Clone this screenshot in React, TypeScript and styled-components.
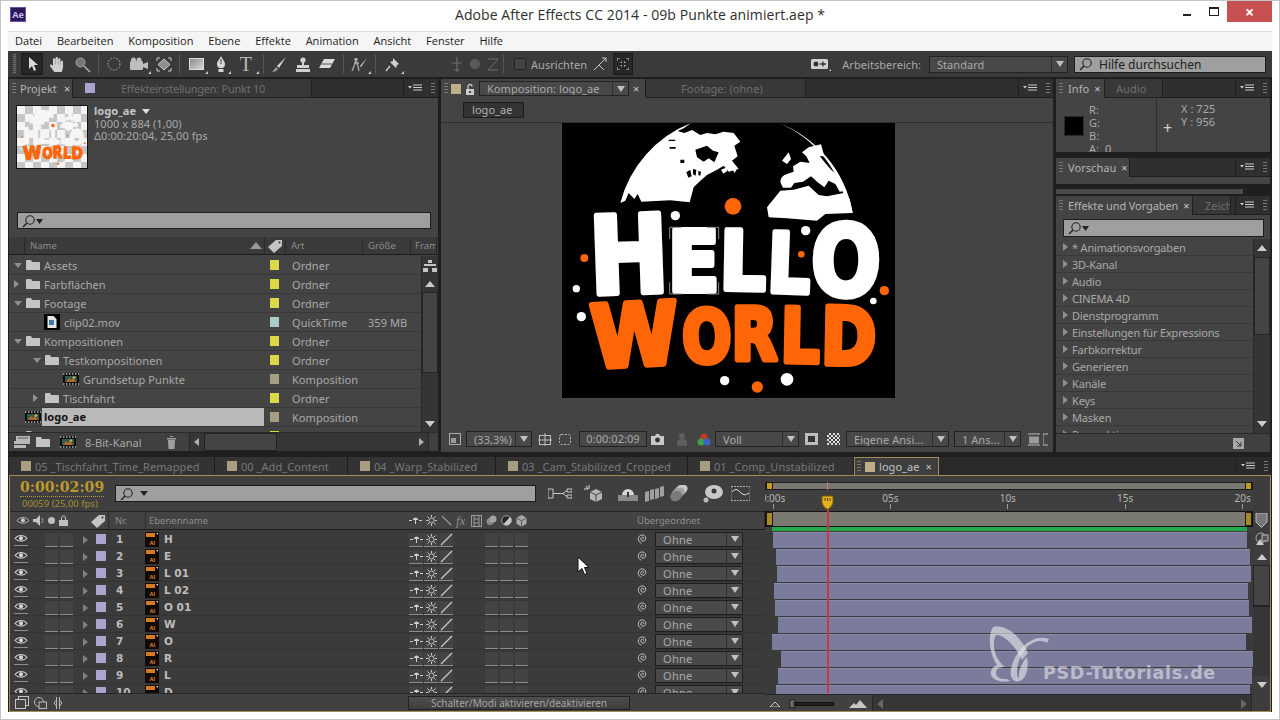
import React from "react";
import styled, { createGlobalStyle } from "styled-components";
import { FaHandPaper } from "react-icons/fa";

const Global = createGlobalStyle`
  html, body { margin: 0; padding: 0; background: #fff; }
  #root { width: 1280px; height: 720px; overflow: hidden; }
  * { box-sizing: border-box; }
`;

const UI = `"Noto Sans", "DejaVu Sans", sans-serif`;
const TEXT = "#a9a9a9";

const Window = styled.div`
  width: 1280px;
  height: 720px;
  background: #fff;
  box-shadow: inset 0 0 0 1px #c4c4c4;
  display: flex;
  flex-direction: column;
  font-family: ${UI};
  font-size: 11px;
  letter-spacing: 0.05px;
  color: ${TEXT};
  overflow: hidden;
`;
const TitleBar = styled.div`
  height: 31px;
  display: grid;
  grid-template-columns: 1fr auto 1fr;
  align-items: start;
  padding-top: 1px;
`;
const AeBadge = styled.div`
  width: 16px;
  height: 15px;
  margin: 6px 0 0 10px;
  background: #2b1a55;
  border: 1px solid #6a4fb0;
  color: #c9b8f2;
  font-size: 9px;
  font-weight: 700;
  line-height: 13px;
  text-align: center;
  letter-spacing: 0;
`;
const TitleText = styled.div`
  font-family: "Open Sans", sans-serif;
  font-size: 14px;
  line-height: 28px;
  letter-spacing: 0.08px;
  color: #2e2e2e;
`;
const WinControls = styled.div`
  display: flex;
  justify-content: flex-end;
  align-items: flex-start;
  padding-right: 8px;
`;
const WinGlyph = styled.div<{ $w: number }>`
  width: ${(p) => p.$w}px;
  height: 21px;
  display: flex;
  align-items: center;
  justify-content: center;
`;
const CloseBtn = styled(WinGlyph)`
  background: #c75050;
  color: #fff;
  font-size: 16px;
  font-weight: 700;
`;
const MenuBar = styled.div`
  height: 20px;
  margin: 0 8px;
  background: #f5f5f5;
  border-top: 1px solid #dcdcdc;
  display: flex;
  align-items: center;
  gap: 14.8px;
  padding-left: 7px;
  padding-bottom: 2px;
  font-family: "Open Sans", sans-serif;
  font-size: 11px;
  letter-spacing: 0.02px;
  color: #222;
`;
const Frame = styled.div`
  width: 1264px;
  margin: 0 8px;
  background: #1f1f1f;
  display: flex;
  flex-direction: column;
`;
const Toolbar = styled.div`
  height: 26px;
  background: #3a3a3a;
  display: flex;
  align-items: center;
  padding-left: 5px;
`;
const Grip = styled.div<{ $m?: string }>`
  width: 4px;
  height: 11px;
  flex-shrink: 0;
  margin: ${(p) => p.$m || "0"};
  background: repeating-linear-gradient(#777 0 1px, transparent 1px 3px);
`;
const ToolGrip = styled(Grip)`
  height: 20px;
  width: 3px;
  background: repeating-linear-gradient(#6a6a6a 0 1px, #4a4a4a 1px 2px);
`;
const ToolSlot = styled.div<{ $w: number; $on?: boolean; $ml?: number; $dim?: boolean }>`
  width: ${(p) => p.$w}px;
  height: 22px;
  flex-shrink: 0;
  margin-left: ${(p) => p.$ml || 0}px;
  display: flex;
  align-items: center;
  justify-content: center;
  position: relative;
  color: #cfcfcf;
  opacity: ${(p) => (p.$dim ? 0.35 : 1)};
  background: ${(p) => (p.$on ? "#262626" : "transparent")};
  border: ${(p) => (p.$on ? "1px solid #1a1a1a" : "0")};
`;
const Corner = styled.span`
  position: absolute;
  right: 1px;
  bottom: 1px;
  width: 0;
  height: 0;
  border-left: 3px solid transparent;
  border-bottom: 3px solid #ccc;
`;
const ToolSep = styled.div<{ $mx?: number }>`
  width: 1px;
  height: 20px;
  flex-shrink: 0;
  margin: 0 ${(p) => (p.$mx === undefined ? 3 : p.$mx)}px;
  background: #555;
`;
const CheckBox = styled.div`
  width: 12px;
  height: 12px;
  margin: 0 5px 0 9px;
  background: #444;
  border: 1px solid #222;
`;
const Spacer = styled.div`
  flex: 1;
`;
const ToolLabel = styled.span<{ $ml?: number; $w?: number }>`
  margin-left: ${(p) => p.$ml || 0}px;
  width: ${(p) => (p.$w ? `${p.$w}px` : "auto")};
  white-space: nowrap;
  color: ${TEXT};
`;
const DropDown = styled.div<{ $w: number; $ml?: number; $mr?: number; $h?: number }>`
  width: ${(p) => p.$w}px;
  height: ${(p) => p.$h || 16}px;
  margin-left: ${(p) => p.$ml || 0}px;
  margin-right: ${(p) => p.$mr || 0}px;
  flex-shrink: 0;
  background: #484848;
  border: 1px solid #222;
  display: flex;
  align-items: center;
  padding: 0 0 0 7px;
  color: ${TEXT};
  white-space: nowrap;
  overflow: hidden;
  & > span:first-child {
    flex: 1;
  }
`;
const DropArrow = styled.div`
  height: 100%;
  width: 16px;
  flex-shrink: 0;
  border-left: 1px solid #2e2e2e;
  margin: 0;
  display: flex;
  align-items: center;
  justify-content: center;
  &::after {
    content: "";
    border-left: 4px solid transparent;
    border-right: 4px solid transparent;
    border-top: 6px solid #c0c0c0;
  }
`;
const SearchBox = styled.div<{ $w?: number; $h?: number; $m?: string }>`
  width: ${(p) => (p.$w ? `${p.$w}px` : "auto")};
  height: ${(p) => p.$h || 16}px;
  margin: ${(p) => p.$m || 0};
  flex-shrink: 0;
  background: #9f9f9f;
  border: 1px solid #1c1c1c;
  display: flex;
  align-items: center;
  padding-left: 4px;
  gap: 6px;
  color: #1d1d1d;
`;
const HelpText = styled.span`
  font-size: 12px;
  letter-spacing: 0;
`;
const Workspace = styled.div`
  height: 380px;
  padding: 2px 1px 0;
  display: flex;
  gap: 3px;
  align-items: flex-start;
`;
const Panel = styled.div<{ $w?: number; $h: number; $mt?: number }>`
  width: ${(p) => (p.$w ? `${p.$w}px` : "100%")};
  height: ${(p) => p.$h}px;
  margin-top: ${(p) => p.$mt || 0}px;
  flex-shrink: 0;
  background: #444;
  display: flex;
  flex-direction: column;
  overflow: hidden;
`;
const TabRow = styled.div`
  height: 19px;
  flex-shrink: 0;
  background: #2f2f2f;
  display: flex;
  align-items: stretch;
  border-bottom: 1px solid #1f1f1f;
`;
const Tab = styled.div<{ $w?: number; $on?: boolean; $pl?: number; $tight?: boolean }>`
  width: ${(p) => (p.$w ? `${p.$w}px` : "auto")};
  display: flex;
  align-items: center;
  flex-shrink: 0;
  padding-left: ${(p) => p.$pl ?? 3}px;
  background: ${(p) => (p.$on ? "#444" : "#383838")};
  margin-bottom: ${(p) => (p.$on ? "-1px" : "0")};
  border-right: 1px solid #1f1f1f;
  color: ${(p) => (p.$on ? "#b4b4b4" : "#6e6e6e")};
  letter-spacing: ${(p) => (p.$tight ? "-0.25px" : "inherit")};
  white-space: nowrap;
  overflow: hidden;
`;
const TabLabel = styled.span`
  letter-spacing: -0.1px;
`;
const CloseX = styled.span<{ $ml: number }>`
  margin-left: ${(p) => p.$ml}px;
  color: #c8c8c8;
  font-size: 11px;
`;
const Swatch = styled.div<{ $c: string; $w?: number; $h?: number; $m?: string }>`
  width: ${(p) => p.$w || 10}px;
  height: ${(p) => p.$h || 10}px;
  margin: ${(p) => p.$m || 0};
  flex-shrink: 0;
  background: ${(p) => p.$c};
`;
const TabEnd = styled.div`
  margin-left: auto;
  display: flex;
  align-items: center;
  border-left: 1px solid #1f1f1f;
  padding-left: 4px;
  gap: 0;
`;
const ThumbRow = styled.div`
  height: 107px;
  flex-shrink: 0;
  display: flex;
  gap: 6px;
  padding: 7px 0 0 7px;
  line-height: 12.5px;
`;
const Thumb = styled.div`
  width: 72px;
  height: 64px;
  border: 1px solid #111;
  flex-shrink: 0;
  background: repeating-conic-gradient(#c6c6c6 0 25%, #f4f4f4 0 50%) 0 0 / 16px 16px;
  overflow: hidden;
`;
const ThumbInfo = styled.div`
  padding-top: 0;
`;
const ThumbTitle = styled.div`
  font-weight: 700;
  color: #c6c6c6;
  display: flex;
  align-items: center;
  gap: 6px;
`;
const TriD = styled.span<{ $s?: number; $c?: string }>`
  display: inline-block;
  flex-shrink: 0;
  border-left: ${(p) => p.$s || 4}px solid transparent;
  border-right: ${(p) => p.$s || 4}px solid transparent;
  border-top: ${(p) => (p.$s || 4) + 1}px solid ${(p) => p.$c || "#ccc"};
`;
const TriU = styled.span<{ $s?: number; $c?: string; $mr?: number }>`
  display: inline-block;
  flex-shrink: 0;
  margin-right: ${(p) => p.$mr || 0}px;
  border-left: ${(p) => p.$s || 5}px solid transparent;
  border-right: ${(p) => p.$s || 5}px solid transparent;
  border-bottom: ${(p) => (p.$s || 5) + 1}px solid ${(p) => p.$c || "#ccc"};
`;
const TriR = styled.span<{ $s?: number; $c?: string; $end?: boolean }>`
  display: inline-block;
  flex-shrink: 0;
  margin: ${(p) => (p.$end ? "0 4px 0 auto" : "0")};
  border-top: ${(p) => p.$s || 4}px solid transparent;
  border-bottom: ${(p) => p.$s || 4}px solid transparent;
  border-left: ${(p) => (p.$s || 4) + 1}px solid ${(p) => p.$c || "#8f8f8f"};
`;
const TriL = styled.span<{ $s?: number; $c?: string }>`
  display: inline-block;
  flex-shrink: 0;
  margin-left: 4px;
  border-top: ${(p) => p.$s || 4}px solid transparent;
  border-bottom: ${(p) => p.$s || 4}px solid transparent;
  border-right: ${(p) => (p.$s || 4) + 1}px solid ${(p) => p.$c || "#8f8f8f"};
`;
const ColHead = styled.div`
  height: 18px;
  margin-top: 8px;
  flex-shrink: 0;
  display: flex;
  align-items: center;
  background: #3a3a3a;
  border-bottom: 1px solid #1c1c1c;
  font-size: 9.5px;
  color: #8c8c8c;
  letter-spacing: 0;
`;
const ColCell = styled.div<{ $w: number; $pl?: number; $between?: boolean }>`
  width: ${(p) => p.$w}px;
  height: 100%;
  flex-shrink: 0;
  padding-left: ${(p) => p.$pl ?? 4}px;
  padding-right: ${(p) => (p.$between ? 2 : 0)}px;
  border-right: 1px solid #2a2a2a;
  display: flex;
  align-items: center;
  justify-content: ${(p) => (p.$between ? "space-between" : "flex-start")};
  overflow: hidden;
  white-space: nowrap;
`;
const ListArea = styled.div`
  flex: 1;
  display: flex;
  min-height: 0;
  margin-top: 1px;
`;
const ListRows = styled.div`
  flex: 1;
  overflow: hidden;
`;
const ProjRow = styled.div`
  height: 19px;
  display: grid;
  grid-template-columns: 255px 28px 76px auto;
  align-items: center;
  border-bottom: 1px solid #383838;
`;
const NameCell = styled.div<{ $pad: number }>`
  display: flex;
  align-items: center;
  height: 100%;
  padding-left: ${(p) => p.$pad}px;
  white-space: nowrap;
  overflow: hidden;
`;
const ArrowSlot = styled.div`
  width: 12px;
  flex-shrink: 0;
  display: flex;
  align-items: center;
`;
const RowName = styled.span<{ $sel?: boolean }>`
  margin-left: 4px;
  ${(p) =>
    p.$sel
      ? `flex: 1; margin-left: 1px; height: 18px; line-height: 18px; padding-left: 2px; background: #b9b9b9; color: #111; font-weight: 700;`
      : ""}
`;
const ScrollV = styled.div<{ $w?: number }>`
  width: ${(p) => p.$w || 17}px;
  flex-shrink: 0;
  display: flex;
  flex-direction: column;
  align-items: center;
  background: #353535;
  border-left: 1px solid #272727;
`;
const ScrollArrow = styled.div<{ $h?: number }>`
  height: ${(p) => p.$h || 17}px;
  width: 100%;
  flex-shrink: 0;
  display: flex;
  align-items: center;
  justify-content: center;
`;
const ScrollThumb = styled.div<{ $h: number }>`
  width: 100%;
  height: ${(p) => p.$h}px;
  flex-shrink: 0;
  background: #444;
  border: 1px solid #252525;
`;
const ScrollGap = styled.div`
  flex: 1;
`;
const ListFooter = styled.div<{ $pl?: number }>`
  height: 19px;
  flex-shrink: 0;
  display: flex;
  align-items: center;
  padding-left: ${(p) => p.$pl || 0}px;
  background: #404040;
  border-top: 1px solid #2a2a2a;
`;
const FootItem = styled.div<{ $ml: number }>`
  margin-left: ${(p) => p.$ml}px;
  flex-shrink: 0;
  display: flex;
  align-items: center;
`;
const ScrollH = styled.div<{ $w: number; $ml?: number }>`
  width: ${(p) => p.$w}px;
  margin-left: ${(p) => p.$ml || 0}px;
  height: 18px;
  flex-shrink: 0;
  display: flex;
  align-items: center;
  background: #363636;
  border-left: 1px solid #272727;
  border-right: 1px solid #272727;
`;
const ScrollHThumb = styled.div<{ $w: number; $ml: number }>`
  width: ${(p) => p.$w}px;
  height: 18px;
  margin-left: ${(p) => p.$ml}px;
  background: #444;
  border: 1px solid #222;
`;
const CrumbRow = styled.div`
  height: 25px;
  flex-shrink: 0;
  display: flex;
  align-items: flex-start;
  padding: 4px 0 0 22px;
  border-bottom: 1px solid #2e2e2e;
`;
const Crumb = styled.div`
  width: 61px;
  height: 16px;
  background: #333;
  border: 1px solid #1c1c1c;
  line-height: 14px;
  padding-left: 8px;
  color: #b2b2b2;
`;
const Canvas = styled.div`
  height: 304px;
  flex-shrink: 0;
  padding-left: 121px;
`;
const Comp = styled.div`
  width: 333px;
  height: 275px;
  background: #000;
`;
const ViewerBar = styled.div`
  height: 24px;
  flex-shrink: 0;
  display: flex;
  align-items: center;
  padding-left: 8px;
`;
const TimeField = styled.div<{ $ml: number }>`
  width: 68px;
  height: 16px;
  margin-left: ${(p) => p.$ml}px;
  flex-shrink: 0;
  border: 1px solid #222;
  background: #484848;
  text-align: center;
  line-height: 14px;
  color: ${TEXT};
`;
const ThinBar = styled.div`
  width: 187px;
  height: 5px;
  flex-shrink: 0;
  background: #4a4a4a;
  margin: 5px 0 2px;
`;
const RightCol = styled.div`
  width: 214px;
  display: flex;
  flex-direction: column;
  flex-shrink: 0;
`;
const InfoBody = styled.div`
  flex: 1;
  display: flex;
  overflow: hidden;
`;
const InfoLeft = styled.div`
  width: 101px;
  display: flex;
  padding: 5px 0 0 8px;
  border-right: 1px solid #2e2e2e;
`;
const InfoBlack = styled.div`
  width: 20px;
  height: 20px;
  margin-top: 13px;
  background: #000;
  border: 1px solid #2a2a2a;
`;
const InfoLines = styled.div`
  margin-left: 5px;
  line-height: 13px;
`;
const InfoRight = styled.div`
  flex: 1;
  padding: 4px 0 0 24px;
  line-height: 13px;
  position: relative;
`;
const Cross = styled.span`
  position: absolute;
  left: 6px;
  top: 22px;
  font-size: 16px;
  line-height: 16px;
  color: #cfcfcf;
`;
const EffectRow = styled.div`
  height: 17px;
  display: flex;
  align-items: center;
  gap: 4px;
  padding-left: 7px;
  border-bottom: 1px solid #383838;
  white-space: nowrap;
  letter-spacing: -0.17px;
`;
const EffectArea = styled.div`
  flex: 1;
  display: flex;
  min-height: 0;
  margin-top: 2px;
`;
const TimelineTabs = styled.div`
  height: 18px;
  margin-left: 1px;
  margin-right: 1px;
  display: flex;
  align-items: stretch;
  background: #2a2a2a;
`;
const TLTab = styled.div<{ $w: number; $on?: boolean }>`
  width: ${(p) => p.$w}px;
  flex-shrink: 0;
  display: flex;
  align-items: center;
  gap: 4px;
  padding-left: ${(p) => (p.$on ? 2 : 12)}px;
  background: ${(p) => (p.$on ? "#3e3e3e" : "#333")};
  color: ${(p) => (p.$on ? "#c2c2c2" : "#787878")};
  border-right: 1px solid #1c1c1c;
  border: ${(p) => (p.$on ? "1px solid #a58c55" : "")};
  border-bottom: 0;
  white-space: nowrap;
  overflow: hidden;
`;
const TimelinePanel = styled.div`
  position: relative;
  height: 237px;
  margin: 0 1px;
  border: 1px solid #a58c55;
  background: #3c3c3c;
  display: flex;
  overflow: hidden;
`;
const LeftPane = styled.div`
  width: 755px;
  flex-shrink: 0;
  display: flex;
  flex-direction: column;
`;
const TopStrip = styled.div`
  height: 36px;
  display: flex;
  align-items: center;
  background: #3f3f3f;
  flex-shrink: 0;
  border-bottom: 1px solid #262626;
`;
const TimeBlock = styled.div`
  width: 105px;
  flex-shrink: 0;
  padding-left: 10px;
  padding-top: 1px;
`;
const TimeCode = styled.div`
  font-family: "DejaVu Serif", serif;
  font-weight: 700;
  font-size: 14px;
  line-height: 17px;
  letter-spacing: 0.05px;
  color: #bd9a2c;
  border-bottom: 1px dotted #b59a3e;
  width: 84px;
`;
const Fps = styled.div`
  font-size: 9.5px;
  line-height: 13px;
  color: #a68c34;
  letter-spacing: 0;
  margin-left: 2px;
`;
const LayerHeader = styled.div`
  height: 18px;
  flex-shrink: 0;
  display: flex;
  align-items: center;
  background: #434343;
  border-bottom: 1px solid #1c1c1c;
  font-size: 9.5px;
  letter-spacing: 0;
  color: #8d8d8d;
`;
const HeadSlot = styled.div<{ $w: number; $pl?: number; $line?: boolean; $gap?: number }>`
  width: ${(p) => p.$w}px;
  flex-shrink: 0;
  height: 100%;
  display: flex;
  align-items: center;
  gap: ${(p) => p.$gap ?? 3}px;
  padding-left: ${(p) => p.$pl || 0}px;
  ${(p) => (p.$line ? "box-shadow: inset -1px 0 0 #2b2b2b;" : "")}
`;
const FxGlyph = styled.span`
  font-family: "Liberation Serif", serif;
  font-style: italic;
  font-size: 13px;
  width: 11px;
`;
const LayerList = styled.div`
  height: 162px;
  flex-shrink: 0;
  overflow: hidden;
  margin-top: 1px;
`;
const LayerRow = styled.div`
  height: 17px;
  display: grid;
  grid-template-columns: 35px 33px 18px 14px 35px 19px 245px 76px 152px 18px 88px;
  align-items: center;
  border-bottom: 1px solid #333;
  background: #3b3b3b;
`;
const EyeCell = styled.div`
  padding-left: 4px;
`;
const ArrowCell = styled.div`
  padding-left: 5px;
`;
const SwitchGroup = styled.div<{ $gap?: number }>`
  display: flex;
  gap: ${(p) => p.$gap ?? 2}px;
  align-items: center;
`;
const SwitchBox = styled.div<{ $w?: number }>`
  width: ${(p) => p.$w || 13}px;
  height: 15px;
  background: #434343;
  border-top: 1px solid #363636;
  border-bottom: 1px solid #8d8d8d;
  display: flex;
  align-items: center;
  justify-content: center;
`;
const LayerNum = styled.div`
  padding-left: 6px;
  font-family: "DejaVu Sans", sans-serif;
  font-weight: 700;
  font-size: 10.5px;
  letter-spacing: 0;
  color: #bdbdbd;
`;
const LayerName = styled.div`
  font-family: "DejaVu Sans", sans-serif;
  font-weight: 700;
  font-size: 10.5px;
  letter-spacing: 0;
  color: #bdbdbd;
`;
const ParentDrop = styled(DropDown)`
  margin: 0;
  height: 15px;
  padding-left: 7px;
  background: #494949;
  border-color: #1e1e1e;
  letter-spacing: 0.3px;
`;
const FootBar = styled.div`
  height: 18px;
  flex-shrink: 0;
  display: flex;
  align-items: center;
  background: #414141;
  border-top: 1px solid #262626;
`;
const ModeButton = styled.div`
  width: 222px;
  height: 14px;
  margin-left: 345px;
  background: linear-gradient(#4e4e4e, #3d3d3d);
  border: 1px solid #222;
  text-align: center;
  line-height: 12px;
  font-size: 10px;
  letter-spacing: 0;
  color: #a4a4a4;
`;
const GraphPane = styled.div`
  position: relative;
  width: 488px;
  flex-shrink: 0;
  display: flex;
  flex-direction: column;
  background: #3f3f3f;
`;
const NavTrack = styled.div`
  height: 8px;
  margin: 6px 0 0;
  flex-shrink: 0;
  background: #7a7a72;
  border: 1px solid #1c1c1c;
  display: flex;
  justify-content: space-between;
`;
const Handle = styled.div<{ $h: number }>`
  width: 7px;
  height: ${(p) => p.$h}px;
  margin-top: -1px;
  background: #c59b1f;
  border: 1px solid #1a1a1a;
  flex-shrink: 0;
`;
const Ruler = styled.div`
  height: 21px;
  flex-shrink: 0;
  display: flex;
  gap: 97.4px;
  overflow: hidden;
`;
const RulerMark = styled.div<{ $first?: boolean }>`
  width: 20px;
  margin-left: ${(p) => (p.$first ? -2 : 0)}px;
  flex-shrink: 0;
  display: flex;
  flex-direction: column;
  align-items: center;
  font-size: 10px;
  letter-spacing: 0;
  color: #b4b4b4;
  line-height: 12px;
  padding-top: 2px;
  white-space: nowrap;
  &::after {
    content: "";
    width: 1px;
    height: 5px;
    background: #9d9d9d;
  }
`;
const WorkArea = styled.div`
  height: 16px;
  flex-shrink: 0;
  background: #7a7a72;
  border: 1px solid #141414;
  display: flex;
  justify-content: space-between;
`;
const WorkHandle = styled(Handle)`
  margin-top: 0;
  background: #a98a22;
`;
const Green = styled.div`
  height: 4px;
  margin-left: 7px;
  margin-right: 6px;
  flex-shrink: 0;
  background: #25a84c;
`;
const BarList = styled.div`
  height: 162px;
  flex-shrink: 0;
  margin-top: 1px;
  overflow: hidden;
`;
const BarRow = styled.div`
  height: 17px;
  background: #3b3b3b;
`;
const Bar = styled.div<{ $l: number; $w: number }>`
  margin-left: ${(p) => p.$l}px;
  width: ${(p) => p.$w}px;
  height: 16px;
  background: #7b7b9c;
  border-top: 1px solid #8a8aa9;
`;
const Playhead = styled.div`
  position: absolute;
  left: 56px;
  top: 19px;
  width: 13px;
  height: 198px;
  display: flex;
  flex-direction: column;
  align-items: center;
`;
const PlayLine = styled.div`
  width: 2px;
  flex: 1;
  background: #c9364c;
`;
const NavMark = styled.div`
  position: absolute;
  left: 62px;
  top: 6px;
  width: 1px;
  height: 8px;
  background: #d9707f;
`;
const Watermark = styled.div`
  position: absolute;
  left: 222px;
  top: 149px;
  display: flex;
  align-items: flex-end;
  color: rgba(230, 230, 235, 0.62);
`;
const WaterText = styled.div`
  font-family: "DejaVu Sans", sans-serif;
  font-weight: 700;
  font-size: 17.5px;
  letter-spacing: 0.7px;
  margin-left: -10px;
  line-height: 22px;
  margin-bottom: -1px;
`;
const Rail = styled.div`
  width: 17px;
  flex-shrink: 0;
  display: flex;
  flex-direction: column;
  align-items: center;
  background: #3d3d3d;
`;
const RailSlot = styled.div<{ $h: number }>`
  height: ${(p) => p.$h}px;
  flex-shrink: 0;
  display: flex;
  align-items: center;
  justify-content: center;
  width: 100%;
`;
const RailTrack = styled.div`
  flex: 1;
  width: 100%;
  background: #363636;
  border-top: 1px solid #262626;
`;
const SliderTrack = styled.div`
  width: 40px;
  height: 4px;
  background: #222;
  border: 1px solid #111;
`;
const SliderKnob = styled.div`
  width: 7px;
  height: 9px;
  margin-right: -2px;
  background: #666;
  border: 1px solid #222;
  border-radius: 3px 3px 0 0;
`;
const CursorWrap = styled.div`
  position: absolute;
  left: 567px;
  top: 80px;
`;
const LetterT = styled.span`
  font-family: "Liberation Serif", serif;
  font-size: 20px;
  color: #b8b8b8;
`;

const Ic: React.FC<{ w: number; h?: number; children: React.ReactNode }> = ({ w, h, children }) => (
  <svg width={w} height={h ?? w} viewBox={`0 0 ${w} ${h ?? w}`} style={{ display: "block", flexShrink: 0 }}>
    {children}
  </svg>
);

const MenuGlyph = () => (
  <Ic w={14} h={8}>
    <path d="M0 2h4L2 4.500z" fill="#ccc" />
    <path d="M5 1h9M5 3.500h9M5 6h9" stroke="#ccc" strokeWidth="1.200" />
  </Ic>
);
const TabMenu = () => (
  <TabEnd>
    <MenuGlyph />
    <Grip $m="0 3px 0 9px" />
  </TabEnd>
);
const Loupe = () => (
  <Ic w={22} h={14}>
    <circle cx="8" cy="6" r="4.200" fill="none" stroke="#222" strokeWidth="1.100" />
    <path d="M5 9L1 13" stroke="#222" strokeWidth="1.400" />
    <path d="M14 5h7l-3.500 5z" fill="#222" />
  </Ic>
);
const LoupeOnly = () => (
  <Ic w={14} h={14}>
    <circle cx="8" cy="6" r="4.200" fill="none" stroke="#222" strokeWidth="1.100" />
    <path d="M5 9L1 13" stroke="#222" strokeWidth="1.400" />
  </Ic>
);
const Folder = () => (
  <Ic w={14} h={10}>
    <path d="M0 2V1q0-1 1-1h4l1 2h7q1 0 1 1v7H0z" fill="#c4c4c4" />
  </Ic>
);
const CompIcon = () => (
  <Ic w={16} h={12}>
    <rect width="16" height="12" fill="#0c0c0c" />
    <path d="M0 1h16M0 11h16" stroke="#bbb" strokeWidth="1.400" strokeDasharray="1.500 1.500" />
    <rect x="2" y="3" width="12" height="6" fill="#2d5d4e" />
    <path d="M3 9l3-4 2 2 2-3 3 5z" fill="#b16a2b" />
    <circle cx="11" cy="4.500" r="1.200" fill="#d8b04a" />
  </Ic>
);
const MovIcon = () => (
  <Ic w={16} h={16}>
    <rect width="16" height="16" fill="#000" />
    <path d="M3.500 2h6l3 3v9h-9z" fill="#e6e6e6" />
    <rect x="5" y="6" width="5" height="5" fill="#3f78a8" />
  </Ic>
);
const Eye = () => (
  <Ic w={14} h={13}>
    <path d="M1 5.500C4 1.500 10 1.500 13 5.500 10 9 4 9 1 5.500z" fill="none" stroke="#c8c8c8" strokeWidth="1.100" />
    <circle cx="7" cy="5.300" r="2" fill="#d8d8d8" />
    <path d="M0 12.500h14" stroke="#8d8d8d" />
  </Ic>
);
const AiIcon = () => (
  <Ic w={14} h={15}>
    <rect width="14" height="15" fill="#120a04" />
    <rect x="1" y="1" width="9" height="4" fill="#d77a24" />
    <path d="M11 1h2v2z" fill="#e8e8e8" />
    <text x="4.500" y="12.500" fontSize="5.500" fontWeight="700" fill="#e08a32" fontFamily="Liberation Sans, sans-serif">
      AI
    </text>
  </Ic>
);
const Spiral = () => (
  <Ic w={12} h={12}>
    <path
      d="M6 6.200c1-.6.8-1.900-.4-2-1.500-.1-2.300 1.500-1.500 2.900 1 1.600 3.600 1.400 4.400-.4C9.400 4.600 8 2 5.500 1.900 3 1.800 1 3.800 1.300 6.500c.2 1.800 1.400 3.200 3.200 3.600"
      fill="none"
      stroke="#c4c4c4"
      strokeWidth="1"
    />
  </Ic>
);
const Shy = () => (
  <Ic w={13} h={9}>
    <path d="M0 4.500h3M10 4.500h3" stroke="#d0d0d0" strokeWidth="1.100" />
    <path d="M4 3q2.500-3 5 0v1H4zM6 4h1v4H6z" fill="#d0d0d0" />
  </Ic>
);
const Sun = () => (
  <Ic w={11} h={11}>
    <circle cx="5.500" cy="5.500" r="2.600" fill="none" stroke="#c8c8c8" />
    <path d="M5.500 0v2M5.500 9v2M0 5.500h2M9 5.500h2M1.500 1.500l1.500 1.500M8 8l1.500 1.500M1.500 9.500L3 8M8 3l1.500-1.500" stroke="#c8c8c8" />
  </Ic>
);
const Slash = () => (
  <Ic w={13} h={13}>
    <path d="M1 12L12 1" stroke="#c9c9c9" strokeWidth="1.300" />
  </Ic>
);
const BackSlash = () => (
  <Ic w={11} h={11}>
    <path d="M1 1l9 9" stroke="#9a9a9a" strokeWidth="1.200" />
  </Ic>
);
const Swirl = () => (
  <Ic w={11} h={11}>
    <circle cx="4" cy="6.500" r="3.500" fill="#8b8b8b" />
    <circle cx="7" cy="4" r="3.500" fill="#a2a2a2" />
  </Ic>
);
const Half = () => (
  <Ic w={11} h={11}>
    <circle cx="5.500" cy="5.500" r="4.800" fill="#222" stroke="#aaa" />
    <path d="M9 2a4.800 4.800 0 0 1-6.500 7z" fill="#c8c8c8" />
  </Ic>
);
const Cube = () => (
  <Ic w={11} h={12}>
    <path d="M5.500 0l5 2.800v6l-5 3-5-3v-6z" fill="#a8a8a8" />
    <path d="M.5 2.800l5 3 5-3M5.500 5.800v6" stroke="#444" fill="none" strokeWidth=".8" />
  </Ic>
);
const Film = () => (
  <Ic w={11} h={12}>
    <rect x=".5" y=".5" width="10" height="11" fill="none" stroke="#9a9a9a" />
    <path d="M3 .5v11M8 .5v11M3 4h5M3 8h5" stroke="#9a9a9a" />
  </Ic>
);
const Tag = () => (
  <Ic w={16} h={14}>
    <path d="M1 8L9 1h6v6l-8 7z" fill="#c4c4c4" />
    <circle cx="12.500" cy="3.500" r="1" fill="#333" />
  </Ic>
);

const LAYERS = ["H", "E", "L 01", "L 02", "O 01", "W", "O", "R", "L", "D"];
const BARS: [number, number][] = [
  [773, 1247], [776, 1250], [777, 1251], [774, 1248], [775, 1249],
  [778, 1252], [772, 1246], [781, 1253], [778, 1252], [776, 1250],
];
const EFFECTS = [
  "* Animationsvorgaben", "3D-Kanal", "Audio", "CINEMA 4D", "Dienstprogramm",
  "Einstellungen für Expressions", "Farbkorrektur", "Generieren", "Kanäle", "Keys", "Masken", "Perspektive",
];
type Item = { name: string; pad: number; arrow?: "r" | "d"; icon: "f" | "m" | "c"; color: string; art: string; size?: string; sel?: boolean };
const YEL = "#dcd84a";
const ITEMS: Item[] = [
  { name: "Assets", pad: 5, arrow: "d", icon: "f", color: YEL, art: "Ordner" },
  { name: "Farbflächen", pad: 5, arrow: "r", icon: "f", color: YEL, art: "Ordner" },
  { name: "Footage", pad: 5, arrow: "d", icon: "f", color: YEL, art: "Ordner" },
  { name: "clip02.mov", pad: 35, icon: "m", color: "#a8cdc8", art: "QuickTime", size: "359 MB" },
  { name: "Kompositionen", pad: 5, arrow: "d", icon: "f", color: YEL, art: "Ordner" },
  { name: "Testkompositionen", pad: 24, arrow: "d", icon: "f", color: YEL, art: "Ordner" },
  { name: "Grundsetup Punkte", pad: 54, icon: "c", color: "#a59e82", art: "Komposition" },
  { name: "Tischfahrt", pad: 24, arrow: "r", icon: "f", color: YEL, art: "Ordner" },
  { name: "logo_ae", pad: 16, icon: "c", color: "#a59e82", art: "Komposition", sel: true },
  { name: "Lampen", pad: 5, arrow: "r", icon: "f", color: YEL, art: "Ordner" },
];

// ink share of the advance and left bearing for DejaVu Sans Bold, so textLength can size the letter itself
const GLYPH: Record<string, [number, number]> = {
  H: [0.78, 0.11],
  E: [0.79, 0.134],
  L: [0.83, 0.144],
  O: [0.87, 0.065],
  W: [0.946, 0.027],
  R: [0.88, 0.12],
  D: [0.836, 0.11],
};
const STROKE = 18;

const HelloWorld: React.FC<{ small?: boolean }> = ({ small }) => {
  const hi = small ? "#f6f6f6" : "#fff";
  const or = "#ff6608";
  const L = (c: string, ch: string, x: number, bottom: number, h: number, w: number, rot: number) => {
    const [ink, lsb] = GLYPH[ch];
    const len = (w - STROKE) / ink;
    const fs = (h - STROKE) / 0.729;
    return (
      <text
        key={ch + x}
        x={x + STROKE / 2 - lsb * len}
        y={bottom - STROKE / 2}
        fontSize={fs}
        textLength={len}
        lengthAdjust="spacingAndGlyphs"
        fontFamily="DejaVu Sans, sans-serif"
        fontWeight={700}
        fill={c}
        stroke={c}
        strokeWidth={STROKE}
        strokeLinejoin="round"
        transform={`rotate(${rot} ${x + w / 2} ${bottom})`}
      >
        {ch}
      </text>
    );
  };
  return (
    <svg width="100%" height="100%" viewBox="5 12 999 825" style={{ display: "block" }}>
      <g fill={hi}>
        <path d="M180 252A352 352 0 0 1 392 12L370 28 352 36 372 42 395 33 420 48 440 42 465 46 490 38 520 42 540 68 522 80 532 112 515 125 535 150 505 158 490 140 470 152 440 168 420 185 400 205 388 250 330 244 243 248 232 225 222 240 205 222 195 245Z" />
        <path d="M655 12A352 352 0 0 1 877 282L862 282A338 338 0 0 0 655 12Z" />
        <path d="M620 265L640 240 660 215 700 212 745 200 775 228 800 232 850 222 868 240 877 282 795 285 770 305 680 298 625 295Z" />
        <path d="M660 190Q660 170 680 165L700 158 698 142 720 128 748 132 738 112 725 100 745 85 782 76 792 112 778 112 810 150 835 172 858 215 838 218 825 195 805 185 792 205 772 190 752 172 728 188 702 192 692 206 668 206Z" />
        <path d="M665 125L685 100 692 120 680 135Z" />
        <path d="M482 152l15-6 4 10-12 8zM516 148l12 6-6 8z" />
      </g>
      {!small && (
        <g fill="#000">
          <path d="M405 92L440 80 458 95 475 100 462 130 445 118 430 128 410 115Z" />
          <path d="M325 62h20v4h-20zM328 84h18v5h-18zM360 122h12v10h-12z" />
          <path d="M378 160l12-8 4 20-10 4zM398 150l10 2-2 18-8-4zM414 156l8 2-2 12-6-2z" />
        </g>
      )}
      {L(hi, "H", 108, 530, 252, 204, -2)}
      {L(hi, "E", 335, 525, 200, 140, 0)}
      {L(hi, "L", 488, 520, 195, 132, 1)}
      {L(hi, "L", 628, 528, 196, 124, 2)}
      {L(hi, "O", 755, 538, 232, 200, 1)}
      {L(or, "W", 95, 748, 205, 266, -3)}
      {L(or, "O", 368, 738, 176, 146, -1)}
      {L(or, "R", 522, 733, 175, 138, 0)}
      {L(or, "L", 668, 738, 180, 114, 1)}
      {L(or, "D", 790, 745, 190, 156, 1)}
      <g fill={hi}>
        <circle cx="345" cy="290" r="14" />
        <circle cx="48" cy="509" r="11" />
        <circle cx="63" cy="593" r="14" />
        <circle cx="736" cy="335" r="14" />
        <circle cx="939" cy="546" r="10" />
        <circle cx="493" cy="785" r="14" />
        <circle cx="680" cy="781" r="19" />
      </g>
      <g fill={or}>
        <circle cx="518" cy="262" r="25" />
        <circle cx="72" cy="417" r="12" />
        <circle cx="723" cy="406" r="10" />
        <circle cx="972" cy="515" r="14" />
        <circle cx="591" cy="804" r="17" />
      </g>
      {!small && (
        <path d="M328 360v-35h35M440 325h35v35M475 490v35h-35M363 525h-35v-35" fill="none" stroke="#8a8a8a" strokeWidth="3" />
      )}
    </svg>
  );
};

const ProjectPanel = () => (
  <Panel $w={429} $h={372}>
    <TabRow>
      <Tab $w={64} $on>
        <Grip $m="0 4px 0 0" />
        Projekt
        <CloseX $ml={7}>×</CloseX>
      </Tab>
      <Tab $w={239} $pl={12} $tight>
        <Swatch $c="#a9a4cc" $m="0 26px 0 0" />
        Effekteinstellungen: Punkt 10
      </Tab>
      <TabMenu />
    </TabRow>
    <ThumbRow>
      <Thumb>
        <HelloWorld small />
      </Thumb>
      <ThumbInfo>
        <ThumbTitle>
          logo_ae <TriD $c="#ddd" />
        </ThumbTitle>
        <div>1000 x 884 (1,00)</div>
        <div>Δ0:00:20:04, 25,00 fps</div>
      </ThumbInfo>
    </ThumbRow>
    <SearchBox $w={414} $h={17} $m="7px 0 0 8px">
      <Loupe />
    </SearchBox>
    <ColHead>
      <ColCell $w={16} $pl={0} />
      <ColCell $w={240} $pl={5} $between>
        Name
        <TriU $c="#9a9a9a" $s={6} />
      </ColCell>
      <ColCell $w={21} $pl={2}>
        <Tag />
      </ColCell>
      <ColCell $w={77} $pl={5}>
        Art
      </ColCell>
      <ColCell $w={48} $pl={5}>
        Größe
      </ColCell>
      <ColCell $w={26} $pl={4}>
        Fram
      </ColCell>
    </ColHead>
    <ListArea>
      <ListRows>
        {ITEMS.map((it) => (
          <ProjRow key={it.name}>
            <NameCell $pad={it.pad}>
              {it.arrow && <ArrowSlot>{it.arrow === "r" ? <TriR /> : <TriD $c="#8f8f8f" $s={4} />}</ArrowSlot>}
              {it.icon === "f" && <Folder />}
              {it.icon === "m" && <MovIcon />}
              {it.icon === "c" && <CompIcon />}
              <RowName $sel={it.sel}>{it.name}</RowName>
            </NameCell>
            <Swatch $c={it.color} $w={9} $m="0 0 0 6px" />
            <span>{it.art}</span>
            <span>{it.size}</span>
          </ProjRow>
        ))}
      </ListRows>
      <ScrollV>
        <ScrollArrow $h={19}>
          <Ic w={14} h={12}>
            <path d="M5 0h4v3H5zM1 4h12v2H1zM0 8h5v4H0zM9 8h5v4H9z" fill="#c4c4c4" />
          </Ic>
        </ScrollArrow>
        <ScrollArrow>
          <TriU />
        </ScrollArrow>
        <ScrollThumb $h={81} />
        <ScrollGap />
        <ScrollArrow>
          <TriD $c="#ccc" $s={5} />
        </ScrollArrow>
      </ScrollV>
    </ListArea>
    <ListFooter>
      <FootItem $ml={5}>
        <Ic w={16} h={12}>
          <path d="M2 0h14v8H2zM0 5h12v3H0zM0 9h12v3H0z" fill="#b8b8b8" />
          <path d="M4 2h10" stroke="#555" />
        </Ic>
      </FootItem>
      <FootItem $ml={6}>
        <Folder />
      </FootItem>
      <FootItem $ml={10}>
        <CompIcon />
      </FootItem>
      <FootItem $ml={9}>8-Bit-Kanal</FootItem>
      <FootItem $ml={24}>
        <Ic w={11} h={13}>
          <path d="M1 2h9v1.500H1zM4 0h3v1H4zM2 4h7l-.5 9h-6z" fill="#a0a0a0" />
        </Ic>
      </FootItem>
      <ScrollH $w={240} $ml={12}>
        <TriL $s={4} $c="#b0b0b0" />
        <ScrollHThumb $w={73} $ml={5} />
        <TriR $c="#b0b0b0" $end />
      </ScrollH>
    </ListFooter>
  </Panel>
);

const CompPanel = () => (
  <Panel $w={612} $h={373}>
    <TabRow>
      <Tab $w={205} $on $pl={3}>
        <Grip $m="0 3px 0 0" />
        <Swatch $c="#bfae8a" $m="0 4px 0 0" />
        <Ic w={10} h={12}>
          <path d="M3 6V3.500a2 2 0 0 1 4 0" stroke="#ccc" strokeWidth="1.300" fill="none" />
          <rect x="1" y="6" width="8" height="6" fill="#ccc" />
          <rect x="4" y="8" width="2" height="2" fill="#444" />
        </Ic>
        <DropDown $w={150} $ml={4} $h={15}>
          <span>Komposition: logo_ae</span>
          <DropArrow />
        </DropDown>
        <CloseX $ml={4}>×</CloseX>
      </Tab>
      <Tab $w={160} $pl={35}>
        Footage: (ohne)
      </Tab>
      <TabMenu />
    </TabRow>
    <CrumbRow>
      <Crumb>logo_ae</Crumb>
    </CrumbRow>
    <Canvas>
      <Comp>
        <HelloWorld />
      </Comp>
    </Canvas>
    <ViewerBar>
      <Ic w={12} h={12}>
        <rect x=".5" y=".5" width="11" height="11" fill="none" stroke="#aaa" />
        <rect x="2" y="5" width="5" height="5" fill="#999" />
      </Ic>
      <DropDown $w={66} $ml={5}>
        <span>(33,3%)</span>
        <DropArrow />
      </DropDown>
      <FootItem $ml={6}>
        <Ic w={14} h={13}>
          <rect x="1.500" y="2.500" width="11" height="9" fill="none" stroke="#c0c0c0" />
          <path d="M7 0v13M0 7h14" stroke="#c0c0c0" />
        </Ic>
      </FootItem>
      <FootItem $ml={6}>
        <Ic w={14} h={13}>
          <rect x="1.500" y="1.500" width="11" height="10" rx="2" fill="none" stroke="#c0c0c0" strokeDasharray="2 1.500" />
        </Ic>
      </FootItem>
      <TimeField $ml={7}>0:00:02:09</TimeField>
      <FootItem $ml={4}>
        <Ic w={13} h={11}>
          <path d="M0 2h4l1-2h3l1 2h4v9H0z" fill="#c8c8c8" />
          <circle cx="6.500" cy="6" r="2.400" fill="#333" />
        </Ic>
      </FootItem>
      <FootItem $ml={12}>
        <Ic w={12} h={13}>
          <circle cx="6" cy="3" r="3" fill="#5e5e5e" />
          <path d="M1 13V9q0-3 5-3t5 3v4z" fill="#5e5e5e" />
        </Ic>
      </FootItem>
      <FootItem $ml={9}>
        <Ic w={14} h={13}>
          <circle cx="7" cy="4" r="3.500" fill="#c0392b" />
          <circle cx="4" cy="9" r="3.500" fill="#3fa34d" />
          <circle cx="10" cy="9" r="3.500" fill="#3a63c4" />
        </Ic>
      </FootItem>
      <DropDown $w={84} $ml={4}>
        <span>Voll</span>
        <DropArrow />
      </DropDown>
      <FootItem $ml={6}>
        <Ic w={13} h={12}>
          <rect width="13" height="12" fill="#bdbdbd" />
          <rect x="3" y="3" width="7" height="6" fill="#333" />
        </Ic>
      </FootItem>
      <FootItem $ml={9}>
        <Swatch $c="repeating-conic-gradient(#ddd 0 25%, #444 0 50%) 0 0 / 4px 4px" $w={13} $h={12} />
      </FootItem>
      <DropDown $w={103} $ml={6}>
        <span>Eigene Ansi...</span>
        <DropArrow />
      </DropDown>
      <DropDown $w={67} $ml={5}>
        <span>1 Ans...</span>
        <DropArrow />
      </DropDown>
      <FootItem $ml={7}>
        <Ic w={12} h={13}>
          <path d="M0 1h12M0 12h12" stroke="#bbb" />
          <rect x="1" y="3.500" width="10" height="7" fill="#9b9b9b" />
        </Ic>
      </FootItem>
      <FootItem $ml={3}>
        <Ic w={5} h={13}>
          <path d="M5 1H0v11h5" stroke="#bbb" fill="none" />
        </Ic>
      </FootItem>
    </ViewerBar>
  </Panel>
);

const RightPanels = () => (
  <RightCol>
    <Panel $h={73}>
      <TabRow>
        <Tab $w={49} $on>
          <Grip $m="0 5px 0 0" />
          Info
          <CloseX $ml={5}>×</CloseX>
        </Tab>
        <Tab $w={58} $pl={11}>
          Audio
        </Tab>
        <TabMenu />
      </TabRow>
      <InfoBody>
        <InfoLeft>
          <InfoBlack />
          <InfoLines>
            <div>R:</div>
            <div>G:</div>
            <div>B:</div>
            <div>A: &nbsp;0</div>
          </InfoLines>
        </InfoLeft>
        <InfoRight>
          <Cross>+</Cross>
          <div>X : 725</div>
          <div>Y : 956</div>
        </InfoRight>
      </InfoBody>
    </Panel>
    <Panel $h={26} $mt={6}>
      <TabRow>
        <Tab $w={74} $on>
          <Grip $m="0 5px 0 0" />
          Vorschau
          <CloseX $ml={5}>×</CloseX>
        </Tab>
        <TabMenu />
      </TabRow>
    </Panel>
    <ThinBar />
    <Panel $h={256}>
      <TabRow>
        <Tab $w={137} $on>
          <Grip $m="0 5px 0 0" />
          <TabLabel>Effekte und Vorgaben</TabLabel>
          <CloseX $ml={5}>×</CloseX>
        </Tab>
        <Tab $w={38} $pl={12}>
          Zeich
        </Tab>
        <TabMenu />
      </TabRow>
      <SearchBox $h={18} $m="4px 6px 0 7px">
        <Loupe />
      </SearchBox>
      <EffectArea>
        <ListRows>
          {EFFECTS.map((e) => (
            <EffectRow key={e}>
              <TriR />
              {e}
            </EffectRow>
          ))}
        </ListRows>
        <ScrollV>
          <ScrollArrow $h={18}>
            <TriU />
          </ScrollArrow>
          <ScrollThumb $h={78} />
          <ScrollGap />
          <ScrollArrow $h={18}>
            <TriD $c="#ccc" $s={5} />
          </ScrollArrow>
        </ScrollV>
      </EffectArea>
      <ListFooter $pl={177}>
        <Ic w={11} h={11}>
          <rect width="11" height="11" fill="#a8a8a8" />
          <path d="M3 3l5 5M8 4v4H4" stroke="#333" fill="none" />
        </Ic>
      </ListFooter>
    </Panel>
  </RightCol>
);

const TABS: [string, number][] = [
  ["05 _Tischfahrt_Time_Remapped", 206],
  ["00 _Add_Content", 133],
  ["04 _Warp_Stabilized", 148],
  ["03 _Cam_Stabilized_Cropped", 192],
  ["01 _Comp_Unstabilized", 166],
];

const TimelineLeft = () => (
  <LeftPane>
    <TopStrip>
      <TimeBlock>
        <TimeCode>0:00:02:09</TimeCode>
        <Fps>00059 (25,00 fps)</Fps>
      </TimeBlock>
      <SearchBox $w={421} $h={17}>
        <LoupeOnly />
        <TriD $c="#222" />
      </SearchBox>
      <FootItem $ml={12}>
        <Ic w={24} h={13}>
          <path d="M0 2h5v9H0zM8 6.500h7M19 2h5v3h-5zM19 8h5v3h-5z" fill="none" stroke="#c8c8c8" />
          <path d="M5 6.500h4M15 6.500l4-3M15 6.500l4 3" stroke="#c8c8c8" />
        </Ic>
      </FootItem>
      <FootItem $ml={12}>
        <Ic w={19} h={17}>
          <path d="M2 1l2 3M0 4h4M5 0v4" stroke="#ddd" />
          <path d="M12 4l6 3v7l-6 3-6-3V7z" fill="#b5b5b5" />
          <path d="M6 7l6 3 6-3M12 10v7" stroke="#444" fill="none" />
        </Ic>
      </FootItem>
      <FootItem $ml={15}>
        <Ic w={20} h={14}>
          <path d="M4 8a6 6 0 0 1 12 0z" fill="#d5d5d5" />
          <path d="M0 8h20v6H0z" fill="#8a8a8a" />
          <rect x="9" y="5" width="2" height="5" fill="#333" />
        </Ic>
      </FootItem>
      <FootItem $ml={7}>
        <Ic w={19} h={16}>
          <path d="M0 6l4-1v10l-4 1zM5 4l4-1v10l-4 1zM10 3l4-1v10l-4 1zM15 1l4-1v10l-4 1z" fill="#9f9f9f" />
        </Ic>
      </FootItem>
      <FootItem $ml={6}>
        <Ic w={18} h={17}>
          <ellipse cx="11" cy="5" rx="7" ry="5" fill="#c8c8c8" transform="rotate(-30 11 5)" />
          <ellipse cx="8" cy="8" rx="7" ry="5" fill="#a0a0a0" transform="rotate(-30 8 8)" />
          <ellipse cx="6" cy="11" rx="6" ry="5" fill="#7a7a7a" transform="rotate(-30 6 11)" />
        </Ic>
      </FootItem>
      <FootItem $ml={15}>
        <Ic w={20} h={18}>
          <ellipse cx="11" cy="7" rx="9" ry="7" fill="#c9c9c9" />
          <circle cx="11" cy="6" r="2.500" fill="#3a3a3a" />
          <circle cx="3" cy="15" r="2.500" fill="#b8b8b8" />
        </Ic>
      </FootItem>
      <FootItem $ml={8}>
        <Ic w={19} h={15}>
          <path d="M0 .5h19M0 14.500h19M0 .5v14M19 .5v14" stroke="#aaa" fill="none" strokeDasharray="2 1" />
          <path d="M1 6q4-5 8 0t9 1" stroke="#ddd" fill="none" />
        </Ic>
      </FootItem>
    </TopStrip>
    <LayerHeader>
      <HeadSlot $w={68} $pl={6}>
        <Ic w={14} h={9}>
          <path d="M1 4.500C4 .5 10 .5 13 4.500 10 8 4 8 1 4.500z" fill="none" stroke="#bbb" />
          <circle cx="7" cy="4.300" r="2" fill="#ccc" />
        </Ic>
        <Ic w={11} h={11}>
          <path d="M0 4h3l4-4v11L3 7H0z" fill="#c4c4c4" />
          <path d="M8.500 3a3 3 0 0 1 0 5" stroke="#aaa" fill="none" />
        </Ic>
        <Ic w={9} h={9}>
          <circle cx="4.500" cy="4.500" r="3.500" fill="#c0c0c0" />
        </Ic>
        <Ic w={9} h={11}>
          <path d="M2.500 5V3a2 2 0 0 1 4 0v2" stroke="#c0c0c0" fill="none" />
          <rect y="5" width="9" height="6" fill="#c0c0c0" />
        </Ic>
      </HeadSlot>
      <HeadSlot $w={31} $pl={12} $line>
        <Tag />
      </HeadSlot>
      <HeadSlot $w={37} $pl={6} $line>
        Nr.
      </HeadSlot>
      <HeadSlot $w={263} $pl={3}>
        Ebenenname
      </HeadSlot>
      <HeadSlot $w={228} $gap={4}>
        <Shy />
        <Sun />
        <BackSlash />
        <FxGlyph>fx</FxGlyph>
        <Film />
        <Swirl />
        <Half />
        <Cube />
      </HeadSlot>
      <HeadSlot $w={128} $line>
        Übergeordnet
      </HeadSlot>
    </LayerHeader>
    <LayerList>
      {LAYERS.map((n, i) => (
        <LayerRow key={n + i}>
          <EyeCell>
            <Eye />
          </EyeCell>
          <SwitchGroup>
            <SwitchBox />
            <SwitchBox />
          </SwitchGroup>
          <ArrowCell>
            <TriR $c="#808080" />
          </ArrowCell>
          <Swatch $c="#aaa5cc" />
          <LayerNum>{i + 1}</LayerNum>
          <AiIcon />
          <LayerName>{n}</LayerName>
          <SwitchGroup $gap={1}>
            <SwitchBox $w={14}>
              <Shy />
            </SwitchBox>
            <SwitchBox $w={14}>
              <Sun />
            </SwitchBox>
            <SwitchBox $w={14}>
              <Slash />
            </SwitchBox>
          </SwitchGroup>
          <SwitchGroup>
            <SwitchBox />
            <SwitchBox />
            <SwitchBox />
          </SwitchGroup>
          <Spiral />
          <ParentDrop $w={88}>
            <span>Ohne</span>
            <DropArrow />
          </ParentDrop>
        </LayerRow>
      ))}
    </LayerList>
    <FootBar>
      <FootItem $ml={5}>
        <Ic w={14} h={13}>
          <rect x="3.500" y=".5" width="10" height="9" fill="none" stroke="#c4c4c4" />
          <rect x=".5" y="3.500" width="10" height="9" fill="#444" stroke="#c4c4c4" />
        </Ic>
      </FootItem>
      <FootItem $ml={5}>
        <Ic w={13} h={12}>
          <circle cx="5" cy="5" r="4.500" fill="none" stroke="#bbb" />
          <rect x="5" y="5" width="7.500" height="6.500" fill="#444" stroke="#bbb" />
        </Ic>
      </FootItem>
      <FootItem $ml={6}>
        <Ic w={10} h={12}>
          <path d="M3.500 0v12M6.500 0v12M3.500 3L1 6l2.500 3M6.500 3L9 6 6.500 9" stroke="#bbb" fill="none" />
        </Ic>
      </FootItem>
      <ModeButton>Schalter/Modi aktivieren/deaktivieren</ModeButton>
    </FootBar>
  </LeftPane>
);

const MARKS = ["0:00s", "05s", "10s", "15s", "20s"];

const TimelineGraph = () => (
  <GraphPane>
    <NavTrack>
      <Handle $h={8} />
      <Handle $h={8} />
    </NavTrack>
    <Ruler>
      {MARKS.map((t, i) => (
        <RulerMark key={t} $first={i === 0}>
          {t}
        </RulerMark>
      ))}
    </Ruler>
    <WorkArea>
      <WorkHandle $h={14} />
      <WorkHandle $h={14} />
    </WorkArea>
    <Green />
    <BarList>
      {BARS.map(([a, b], i) => (
        <BarRow key={i}>
          <Bar $l={a - 765} $w={b - a} />
        </BarRow>
      ))}
    </BarList>
    <FootBar>
      <FootItem $ml={5}>
        <Ic w={10} h={6}>
          <path d="M0 6l5-5 5 5z" fill="none" stroke="#ccc" />
        </Ic>
      </FootItem>
      <FootItem $ml={9}>
        <SliderKnob />
      </FootItem>
      <SliderTrack />
      <FootItem $ml={15}>
        <Ic w={18} h={8}>
          <path d="M0 8l5-5 2 2 4-5 7 8z" fill="#c8c8c8" />
        </Ic>
      </FootItem>
      <ScrollH $w={380} $ml={5}>
        <TriL $s={5} $c="#666" />
        <TriR $s={5} $c="#666" $end />
      </ScrollH>
    </FootBar>
    <NavMark />
    <Playhead>
      <Ic w={13} h={15}>
        <path d="M1 1h11v7q-1 4-5.500 6.500Q2 12 1 8z" fill="#e0b020" stroke="#7a5c00" />
        <path d="M4 3v3M6.500 3v3M9 3v3" stroke="#5a4000" />
      </Ic>
      <PlayLine />
    </Playhead>
    <Watermark>
      <Ic w={66} h={58}>
        <path
          d="M6 2c14-3 28 10 35 26l-6 7C29 22 18 10 9 10 4 20 8 34 18 42c-6 0-9 2-9 6 0 5 5 6 11 6l3 2C12 58 2 54 4 46c1-3 3-5 6-6C3 30 0 12 6 2z"
          fill="currentColor"
        />
        <path
          d="M62 14C46 8 28 24 24 44c-2 10 4 14 9 12 7-3 9-14 7-24-6 6-9 16-8 22-5-6 0-24 8-32 8-7 16-7 20-4z"
          fill="currentColor"
        />
      </Ic>
      <WaterText>PSD-Tutorials.de</WaterText>
    </Watermark>
  </GraphPane>
);

const TimelineRail = () => (
  <Rail>
    <RailSlot $h={35} />
    <RailSlot $h={18}>
      <Ic w={13} h={15}>
        <path d="M1 0h11v9l-5.500 5.500L1 9z" fill="#777" stroke="#bbb" />
      </Ic>
    </RailSlot>
    <RailSlot $h={19}>
      <Ic w={14} h={13}>
        <circle cx="6" cy="6" r="5" fill="none" stroke="#aaa" />
        <rect x="7" y="3" width="6" height="6" fill="#555" stroke="#bbb" />
        <path d="M1 13l4-6 4 6z" fill="#ccc" />
      </Ic>
    </RailSlot>
    <RailSlot $h={17}>
      <TriU />
    </RailSlot>
    <ScrollThumb $h={41} />
    <RailTrack />
    <RailSlot $h={17}>
      <TriD $c="#ccc" $s={5} />
    </RailSlot>
    <RailSlot $h={18} />
  </Rail>
);

export default function App() {
  return (
    <Window>
      <Global />
      <TitleBar>
        <AeBadge>Ae</AeBadge>
        <TitleText>Adobe After Effects CC 2014 - 09b Punkte animiert.aep *</TitleText>
        <WinControls>
          <WinGlyph $w={27}>
            <Swatch $c="#222" $w={8} $h={2} $m="6px 0 0" />
          </WinGlyph>
          <WinGlyph $w={27}>
            <Ic w={10} h={9}>
              <rect x=".5" y="1" width="9" height="7.500" fill="none" stroke="#222" />
              <path d="M0 1h10" stroke="#222" strokeWidth="2" />
            </Ic>
          </WinGlyph>
          <CloseBtn $w={45}>×</CloseBtn>
        </WinControls>
      </TitleBar>
      <MenuBar>
        {["Datei", "Bearbeiten", "Komposition", "Ebene", "Effekte", "Animation", "Ansicht", "Fenster", "Hilfe"].map((m) => (
          <span key={m}>{m}</span>
        ))}
      </MenuBar>
      <Frame>
        <Toolbar>
          <ToolGrip />
          <ToolSlot $w={22} $on $ml={5}>
            <Ic w={16}>
              <path d="M5 1v12l3-3 2 5 2-1-2-5h4z" fill="#d8d8d8" />
            </Ic>
          </ToolSlot>
          <ToolSlot $w={26}>
            <FaHandPaper size={15} />
          </ToolSlot>
          <ToolSlot $w={26}>
            <Ic w={17}>
              <circle cx="6.500" cy="6.500" r="4.500" fill="#777" stroke="#a5a5a5" />
              <path d="M10 10l6 6" stroke="#b0b0b0" strokeWidth="1.600" />
            </Ic>
          </ToolSlot>
          <ToolSep />
          <ToolSlot $w={24}>
            <Ic w={16}>
              <circle cx="8" cy="8" r="6" fill="none" stroke="#bbb" strokeDasharray="1.500 1.500" />
            </Ic>
          </ToolSlot>
          <ToolSlot $w={26}>
            <Ic w={18} h={14}>
              <rect x="0" y="4" width="13" height="9" rx="1.500" fill="#bdbdbd" />
              <circle cx="3.500" cy="3" r="2.500" fill="#bdbdbd" />
              <circle cx="9" cy="3" r="2.500" fill="#bdbdbd" />
              <path d="M13 7l5-2v7l-5-2z" fill="#bdbdbd" />
            </Ic>
            <Corner />
          </ToolSlot>
          <ToolSlot $w={24}>
            <Ic w={16} h={15}>
              <path d="M1 4V1h3M12 1h3v3M15 11v3h-3M4 14H1v-3" stroke="#ccc" fill="none" />
              <path d="M8 2l6 5.500L8 13 2 7.500z" fill="#8d8d8d" stroke="#ccc" />
            </Ic>
          </ToolSlot>
          <ToolSep />
          <ToolSlot $w={26}>
            <Ic w={15} h={13}>
              <defs>
                <linearGradient id="rg" x1="0" y1="0" x2="1" y2="1">
                  <stop offset="0" stopColor="#8a8a8a" />
                  <stop offset="1" stopColor="#d8d8d8" />
                </linearGradient>
              </defs>
              <rect x=".5" y=".5" width="14" height="11" fill="url(#rg)" stroke="#ddd" />
            </Ic>
            <Corner />
          </ToolSlot>
          <ToolSlot $w={23}>
            <Ic w={10} h={16}>
              <path d="M5 0c1 3 4 5 4 8 0 2-1 3-2 4H3C2 11 1 10 1 8c0-3 3-5 4-8z" fill="#d6d6d6" />
              <rect x="2.500" y="13" width="5" height="3" fill="#d6d6d6" />
              <path d="M5 3v5" stroke="#444" />
            </Ic>
            <Corner />
          </ToolSlot>
          <ToolSlot $w={28}>
            <LetterT>T</LetterT>
            <Corner />
          </ToolSlot>
          <ToolSep />
          <ToolSlot $w={25}>
            <Ic w={15}>
              <path d="M14 0L5 9l2 2z" fill="#d6d6d6" />
              <path d="M4 10l2 2q-2 3-6 3 2-2 4-5z" fill="#9c9c9c" />
            </Ic>
          </ToolSlot>
          <ToolSlot $w={21}>
            <Ic w={14} h={15}>
              <circle cx="7" cy="3" r="2.600" fill="#d0d0d0" />
              <path d="M6 5h2v3H6zM1 8h12v3H1z" fill="#d0d0d0" />
              <path d="M0 12h14v3H0z" fill="#d0d0d0" />
            </Ic>
          </ToolSlot>
          <ToolSlot $w={27}>
            <Ic w={16} h={11}>
              <path d="M5 0h11l-5 9H0z" fill="#dcdcdc" />
              <path d="M2.500 5H13" stroke="#555" />
            </Ic>
          </ToolSlot>
          <ToolSep />
          <ToolSlot $w={25}>
            <Ic w={17} h={15}>
              <circle cx="5" cy="2.500" r="1.800" fill="#aaa" />
              <path d="M5 4L3 9l-2 5M5 4l2 5 1 5M3 6h5" stroke="#aaa" strokeWidth="1.300" fill="none" />
              <path d="M16 1l-7 8 1 1z" fill="#dcdcdc" />
            </Ic>
            <Corner />
          </ToolSlot>
          <ToolSep />
          <ToolSlot $w={26}>
            <Ic w={15}>
              <path d="M8 1l6 6-2 1-1 3-6-6 3-1z" fill="#d0d0d0" />
              <path d="M5 9l-4 5" stroke="#d0d0d0" strokeWidth="1.300" />
            </Ic>
            <Corner />
          </ToolSlot>
          <ToolSlot $w={18} $ml={43} $dim>
            <Ic w={12} h={15}>
              <path d="M6 0v15M1 6h10M3 13h6" stroke="#ccc" strokeWidth="1.200" />
            </Ic>
          </ToolSlot>
          <ToolSlot $w={18} $dim>
            <Ic w={10}>
              <circle cx="5" cy="5" r="5" fill="#999" />
            </Ic>
          </ToolSlot>
          <ToolSlot $w={18} $dim>
            <Ic w={12} h={13}>
              <path d="M1 1h10L1 12h10" stroke="#ccc" fill="none" />
            </Ic>
          </ToolSlot>
          <ToolSep $mx={1} />
          <CheckBox />
          <ToolLabel $w={56}>Ausrichten</ToolLabel>
          <ToolSlot $w={18} $ml={4}>
            <Ic w={14} h={14}>
              <path d="M1 13l5-5 5 5M6 8l7-7M9 1h4v4" stroke="#c4c4c4" fill="none" />
            </Ic>
          </ToolSlot>
          <ToolSlot $w={20} $on $ml={4}>
            <Ic w={12} h={12}>
              <path d="M0 3V0h3M9 0h3v3M12 9v3H9M3 12H0V9" stroke="#c4c4c4" fill="none" />
              <path d="M4 5V4h1M7 4h1v1M8 7v1H7M5 8H4V7" stroke="#c4c4c4" fill="none" />
            </Ic>
          </ToolSlot>
          <Spacer />
          <Ic w={20} h={13}>
            <rect y="1" width="17" height="10" rx="1.500" fill="#d0d0d0" />
            <circle cx="5" cy="6" r="2.500" fill="#333" />
            <path d="M9 6h6M12 3.500v5" stroke="#333" strokeWidth="1.300" />
            <path d="M18 13h2v-2z" fill="#ccc" />
          </Ic>
          <ToolLabel $ml={11}>Arbeitsbereich:</ToolLabel>
          <DropDown $w={139} $ml={8} $h={17}>
            <span>Standard</span>
            <DropArrow />
          </DropDown>
          <SearchBox $w={192} $h={17} $m="0 6px 0 6px">
            <LoupeOnly />
            <HelpText>Hilfe durchsuchen</HelpText>
          </SearchBox>
        </Toolbar>
        <Workspace>
          <ProjectPanel />
          <CompPanel />
          <RightPanels />
        </Workspace>
        <TimelineTabs>
          {TABS.map(([t, w]) => (
            <TLTab key={t} $w={w}>
              <Swatch $c="#a89d80" />
              {t}
            </TLTab>
          ))}
          <TLTab $w={85} $on>
            <Grip />
            <Swatch $c="#bfae8a" />
            logo_ae
            <CloseX $ml={2}>×</CloseX>
          </TLTab>
          <TabMenu />
        </TimelineTabs>
        <TimelinePanel>
          <TimelineLeft />
          <TimelineGraph />
          <TimelineRail />
          <CursorWrap>
            <Ic w={13} h={20}>
              <path d="M1 1v15l4-3.500 2.500 6 2.500-1-2.500-6H12z" fill="#fff" stroke="#111" />
            </Ic>
          </CursorWrap>
        </TimelinePanel>
      </Frame>
    </Window>
  );
}
